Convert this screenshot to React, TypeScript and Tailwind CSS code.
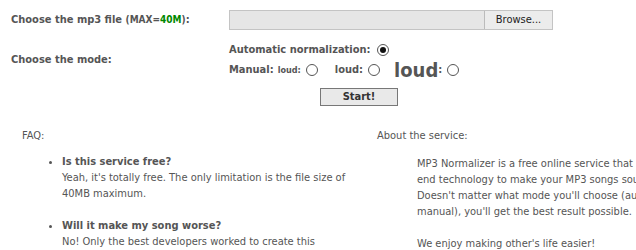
import React from 'react'

function Radio({ checked = false }: { checked?: boolean }) {
  return (
    <span className="inline-flex h-[12px] w-[12px] items-center justify-center rounded-full border border-[#555] bg-white align-middle">
      {checked && <span className="h-[6px] w-[6px] rounded-full bg-[#111]" />}
    </span>
  )
}

export default function App() {
  return (
    <div
      className="h-[250px] w-[636px] overflow-hidden bg-white text-[11px] text-[#555]"
      style={{ fontFamily: '"DejaVu Sans Condensed", "DejaVu Sans", sans-serif' }}
    >
      <div className="w-[760px]">
        {/* upload form */}
        <div className="flex items-center pt-[10px]">
          <div className="w-[229px] pl-[11px] font-bold">
            Choose the mp3 file <span className="text-[10px]">(MAX=<span className="text-[#008800]">40M</span>)</span>:
          </div>
          <div className="flex h-[20px] w-[324px] border border-[#c4c4c4] bg-[#e6e6e6]">
            <div className="flex-1" />
            <button
              type="button"
              className="w-[68px] border-l border-[#bbb] bg-[#ececec] text-[11px] text-[#222]"
            >
              Browse...
            </button>
          </div>
        </div>

        <div className="mt-[10px] flex items-center">
          <div className="w-[229px] pl-[11px] font-bold">Choose the mode:</div>
          <div className="font-bold leading-[20px]">
            <div className="flex items-center gap-[6px]">
              Automatic normalization: <Radio checked />
            </div>
            <div className="flex items-center">
              <span>Manual:</span>
              <span className="ml-[4px] text-[9px]">loud:</span>
              <span className="ml-[5px]"><Radio /></span>
              <span className="ml-[17px]">loud:</span>
              <span className="ml-[5px]"><Radio /></span>
              <span className="ml-[14px] text-[20px] leading-[20px]">loud</span>
              <span>:</span>
              <span className="ml-[5px]"><Radio /></span>
            </div>
          </div>
        </div>

        <div className="mt-[8px] pl-[320px]">
          <button
            type="button"
            className="h-[18px] w-[78px] border border-[#777] bg-[#e9e9e9] text-[11px] font-bold text-[#333]"
          >
            Start!
          </button>
        </div>

        {/* FAQ + about */}
        <div className="mt-[22px] flex leading-[16px]">
          <div className="w-[377px] shrink-0 pl-[22px]">
            <div>FAQ:</div>
            <ul className="mt-[10px] w-[335px] list-disc pl-[40px]">
              <li>
                <div className="font-bold">Is this service free?</div>
                <div>Yeah, it's totally free. The only limitation is the file size of 40MB maximum.</div>
              </li>
              <li className="mt-[16px]">
                <div className="font-bold">Will it make my song worse?</div>
                <div>No! Only the best developers worked to create this</div>
              </li>
            </ul>
          </div>
          <div className="w-[360px] shrink-0">
            <div>About the service:</div>
            <div className="mt-[12px] w-[330px] pl-[40px]">
              <p>
                MP3 Normalizer is a free online service that uses a high-end technology to make your MP3 songs sound better. Doesn't matter what mode you'll choose (automatic or manual), you'll get the best result possible.
              </p>
              <p className="mt-[16px]">We enjoy making other's life easier!</p>
            </div>
          </div>
        </div>
      </div>
    </div>
  )
}
